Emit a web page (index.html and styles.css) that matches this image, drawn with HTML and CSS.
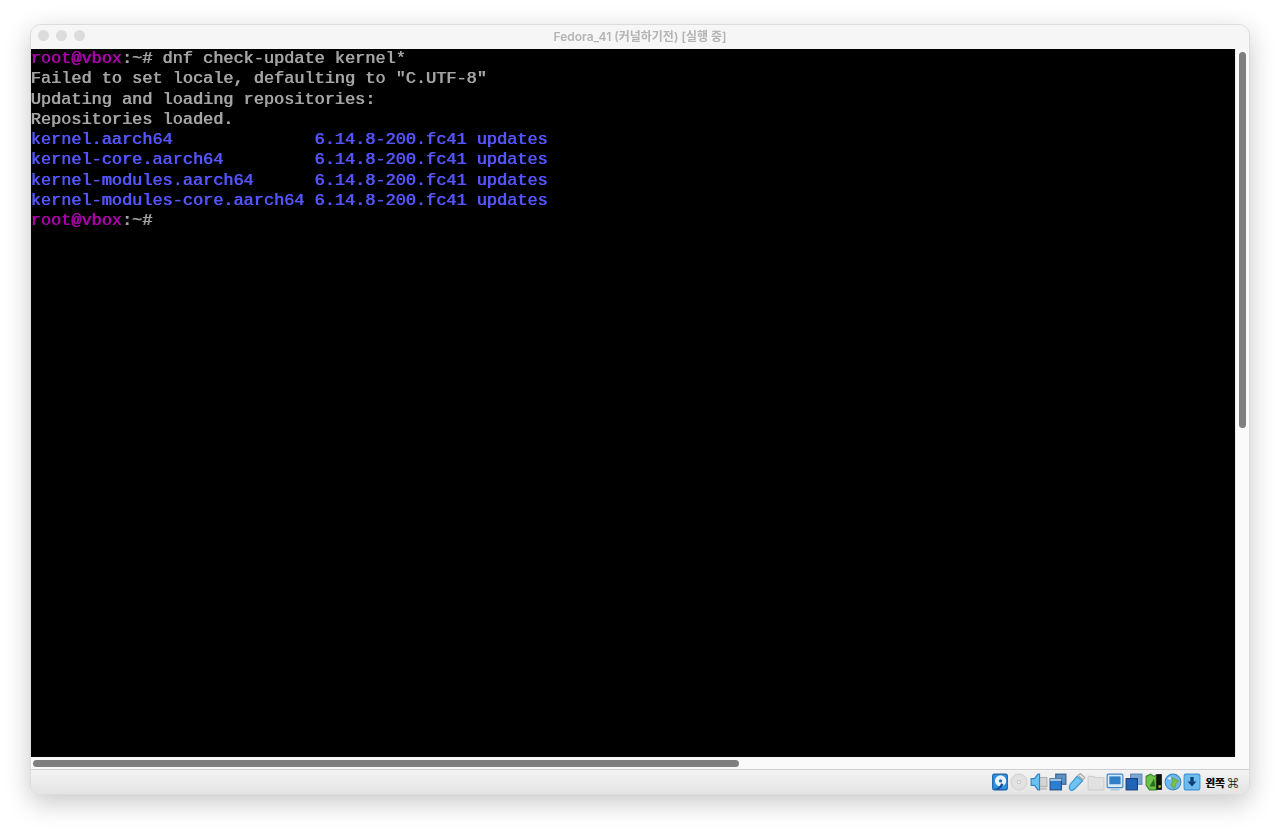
FILE: index.html
```html
<!DOCTYPE html>
<html lang="ko">
<head>
<meta charset="utf-8">
<title>Fedora_41 (커널하기전) [실행 중]</title>
<link rel="stylesheet" href="styles.css">
</head>
<body>
<div class="window">
  <header class="titlebar">
    <div class="lights"><span class="light"></span><span class="light"></span><span class="light"></span></div>
    <div class="title">Fedora_41 (커널하기전) [실행 중]</div>
  </header>
  <div class="middle">
    <div class="viewport">
<pre class="term"><span class="mag">root@vbox</span>:~# dnf check-update kernel*
Failed to set locale, defaulting to "C.UTF-8"
Updating and loading repositories:
Repositories loaded.
<span class="blue">kernel.aarch64              6.14.8-200.fc41 updates
kernel-core.aarch64         6.14.8-200.fc41 updates
kernel-modules.aarch64      6.14.8-200.fc41 updates
kernel-modules-core.aarch64 6.14.8-200.fc41 updates</span>
<span class="mag">root@vbox</span>:~#</pre>
    </div>
    <div class="vtrack"><div class="vthumb"></div></div>
  </div>
  <div class="htrack"><div class="hthumb"></div></div>
  <footer class="status">
    <svg class="ico" viewBox="0 0 16 16"><rect x="1.500" y="1" width="13" height="14" rx="1.500" fill="#2f8fe0" stroke="#1a5fa8"/><circle cx="8.500" cy="7" r="5" fill="#e8f3fb"/><circle cx="8.500" cy="7" r="1.500" fill="#2f6fb0"/><path d="M3 14c3 0 5-2 6-5l2 1c-1 3-3 4-5 5z" fill="#14509a"/></svg>
    <svg class="ico" viewBox="0 0 16 16"><circle cx="8" cy="8" r="7" fill="#e2e2e2" stroke="#d4d4d4"/><circle cx="8" cy="8" r="1.500" fill="#f4f4f4" stroke="#cacaca"/></svg>
    <svg class="ico" viewBox="0 0 16 16"><rect x="8" y="4" width="7" height="8" fill="#d4d4d4" stroke="#b5b5b5"/><rect x="7" y="13" width="8" height="2" fill="#c4c4c4"/><path d="M1 5h3l3-4h1.500v14H7l-3-4H1z" fill="#6cc0ee" stroke="#2f86c4"/></svg>
    <svg class="ico" viewBox="0 0 16 16"><rect x="6" y="1" width="9" height="9" fill="#5d8fc0" stroke="#2e5f92"/><rect x="1" y="5" width="10" height="10" fill="#2a7fd0" stroke="#1d4f85"/><rect x="1" y="5" width="10" height="2" fill="#a8c6e2"/></svg>
    <svg class="ico" viewBox="0 0 16 16"><path d="M2 15c-1-1-1-3 0-5l6-7 5 4-7 7c-1 1-3 2-4 1z" fill="#6ec3f2" stroke="#3c93d0"/><path d="M9 2l2-1.500 4 3.500-2 2z" fill="#e4e4e4" stroke="#a8a8a8"/></svg>
    <svg class="ico" viewBox="0 0 16 16"><path d="M1 3h5l1 1h8v11H1z" fill="#e2e2e2" stroke="#d0d0d0"/></svg>
    <svg class="ico" viewBox="0 0 16 16"><rect x="1" y="1" width="14" height="12" rx="1" fill="#d9e9f6" stroke="#3a86c8"/><rect x="3" y="3" width="10" height="7" fill="#2f7fc8"/><rect x="4" y="14" width="8" height="1.500" fill="#a6c8e4"/></svg>
    <svg class="ico" viewBox="0 0 16 16"><rect x="5" y="1" width="10" height="9" fill="#7ea6d2" stroke="#5c86b6"/><rect x="1" y="5" width="10" height="10" fill="#1f66b8" stroke="#173f78"/></svg>
    <svg class="ico" viewBox="0 0 16 16"><path d="M1 3l4-2 3 2 2-1v13H4L1 11z" fill="#6fc24a" stroke="#3c8a2a"/><path d="M4 12l4-7 1 7z" fill="#2e6a1e"/><rect x="10" y="1" width="5" height="14" fill="#111"/><rect x="12" y="11" width="2" height="2" fill="#b8d820"/></svg>
    <svg class="ico" viewBox="0 0 16 16"><circle cx="8" cy="8" r="7" fill="#6fb8ea" stroke="#3d8cc8"/><path d="M7 4l6 3-2 2-2 5-3-4 2-2z" fill="#7cc23e" stroke="#4f9426" stroke-width=".5"/><path d="M3 5l3-2v3z" fill="#e8f4fc"/></svg>
    <svg class="ico" viewBox="0 0 16 16"><rect x="1" y="1" width="14" height="14" rx="1.500" fill="#6dbcf0" stroke="#3f93d3"/><path d="M6.500 3.500h3v4H12l-4 4.500-4-4.500h2.500z" fill="#123f7a"/></svg>
    <span class="host">왼쪽 ⌘</span>
  </footer>
</div>
</body>
</html>
```
FILE: styles.css
```css
html, body {
  margin: 0;
  height: 833px;
  overflow: hidden;
  background: #fff;
}
body {
  padding: 24px 30px 0;
  box-sizing: border-box;
}
.window {
  width: 1220px;
  height: 771px;
  box-sizing: border-box;
  display: flex;
  flex-direction: column;
  border-radius: 11px;
  overflow: hidden;
  background: #f6f6f6;
  border: 1px solid #dcdcdc;
  box-shadow: 0 8px 26px rgba(0, 0, 0, .22);
}
.titlebar {
  height: 24px;
  flex: none;
  display: flex;
  align-items: center;
  justify-content: center;
  position: relative;
  background: #f6f6f6;
}
.lights {
  position: absolute;
  left: 7px;
  top: 5px;
  display: flex;
  gap: 7px;
}
.light {
  width: 11px;
  height: 11px;
  border-radius: 50%;
  background: #dcdcdc;
}
.title {
  font: 600 12px Inter, "Noto Sans CJK KR", sans-serif;
  color: #b4b4b4;
  position: relative;
  top: -2px;
  filter: blur(.3px);
}
.middle {
  flex: none;
  height: 708px;
  display: flex;
}
.viewport {
  flex: 1;
  background: #000;
  overflow: hidden;
}
.term {
  margin: 0;
  font: 400 16.9px/20.27px "Liberation Mono", monospace;
  color: #a4a4a4;
  text-shadow: .7px 0 currentColor;
  transform: translateX(-.5px);
  filter: blur(.4px);
}
.mag { color: #aa00aa; }
.blue { color: #5555ff; }
.vtrack {
  width: 14px;
  flex: none;
  box-sizing: border-box;
  background: #fafafa;
  border-left: 1px solid #ececec;
  padding: 3px 3px 0;
}
.vthumb {
  width: 7px;
  height: 376px;
  border-radius: 4px;
  background: #7f7f7f;
}
.htrack {
  flex: none;
  height: 13px;
  box-sizing: border-box;
  background: #fafafa;
  border-bottom: 1px solid #cfcfcf;
  padding: 3px 0 0 2px;
}
.hthumb {
  width: 706px;
  height: 7px;
  border-radius: 4px;
  background: #7f7f7f;
}
.status {
  flex: 1;
  display: flex;
  align-items: center;
  justify-content: flex-end;
  gap: 1.2px;
  padding-right: 11px;
  background: linear-gradient(#f3f3f3, #e4e4e4);
}
.ico {
  width: 18px;
  height: 18px;
  flex: none;
  filter: blur(.25px);
}
.host {
  font: 700 10.5px "Noto Sans CJK KR", sans-serif;
  color: #111;
  text-shadow: .4px 0 currentColor;
  margin-left: 3px;
  white-space: nowrap;
}
```
